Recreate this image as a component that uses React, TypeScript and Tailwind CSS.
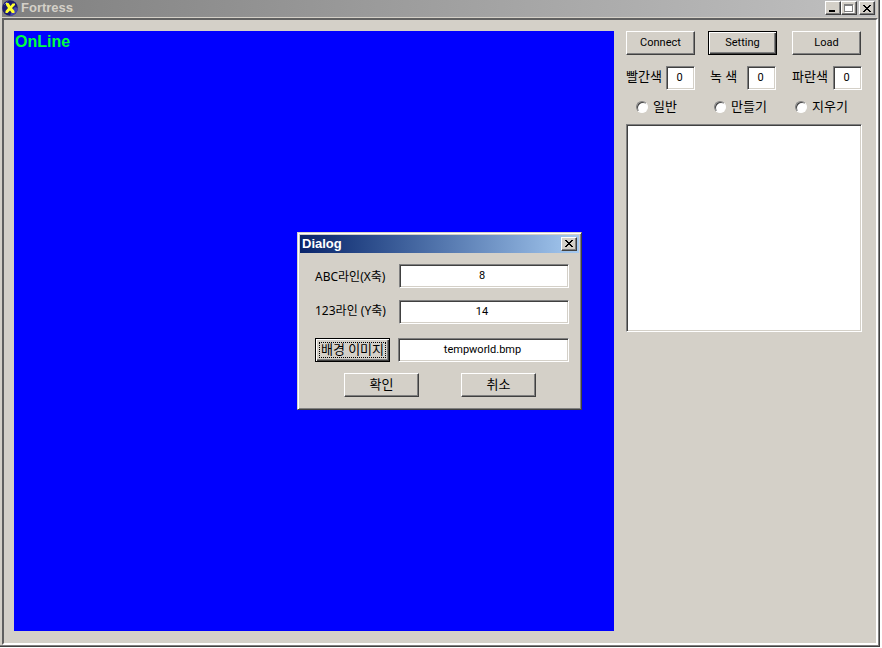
import type { ReactNode } from "react";
import clsx from "clsx";

const SUNKEN =
  "border border-t-[#808080] border-l-[#808080] border-b-white border-r-white bg-white shadow-[inset_1px_1px_0_#404040,inset_-1px_-1px_0_#d4d0c8] outline-none";

const RAISED =
  "border border-t-white border-l-white border-b-[#404040] border-r-[#404040] bg-[#d4d0c8] shadow-[inset_-1px_-1px_0_#808080]";

const COLORS = [
  { id: "red", label: "빨간색", width: "w-[69px]" },
  { id: "green", label: "녹 색", width: "w-[66px]" },
  { id: "blue", label: "파란색", width: "w-[70px]" },
];

const MODES = [
  { id: "normal", label: "일반" },
  { id: "make", label: "만들기" },
  { id: "erase", label: "지우기" },
];

function PushButton({
  children,
  isDefault,
  focused,
  className,
}: {
  children: ReactNode;
  isDefault?: boolean;
  focused?: boolean;
  className?: string;
}) {
  return (
    <button
      type="button"
      className={clsx(
        "flex h-6 items-center justify-center",
        isDefault
          ? "border border-black bg-[#d4d0c8] p-[3px] shadow-[inset_1px_1px_0_#fff,inset_-1px_-1px_0_#404040,inset_-2px_-2px_0_#808080]"
          : RAISED,
        className
      )}
    >
      {focused ? (
        <span className="flex h-full w-full items-center justify-center border border-dotted border-black">
          {children}
        </span>
      ) : (
        children
      )}
    </button>
  );
}

function CaptionButton({ label, children }: { label: string; children: ReactNode }) {
  return (
    <button
      type="button"
      aria-label={label}
      className={clsx("flex h-[14px] w-4 items-center justify-center", RAISED)}
    >
      <svg width="10" height="9" viewBox="0 0 10 9" shapeRendering="crispEdges">
        {children}
      </svg>
    </button>
  );
}

function CloseGlyph() {
  return (
    <path
      d="M1 1h2v1h1v1h2V2h1V1h2v1H8v1H7v1H6v1h1v1h1v1h1v1H7V7H6V6H4v1H3v1H1V7h1V6h1V5h1V4H3V3H2V2H1z"
      fill="#000"
    />
  );
}

function AppIcon() {
  return (
    <svg width="16" height="16" viewBox="0 0 16 16" className="shrink-0" aria-hidden="true">
      <circle cx="8" cy="8" r="7.8" fill="#1c1c70" />
      <path d="M8 15.800A7.800 7.800 0 0 0 15.800 8L13 7l-3 3z" fill="#4848a8" />
      <path d="M2.500 4.500a7 7 0 0 1 3-2.500" stroke="#8c8cc0" fill="none" />
      <path
        d="M4 3h2.500L8.500 6l2-2.500H13V5l-3 3 2.500 3v2h-2.500L8 10.500 5.500 13H3.500v-2L6 8 4 5z"
        fill="#ffff30"
      />
    </svg>
  );
}

function SettingDialog() {
  return (
    <section
      role="dialog"
      aria-labelledby="dialog-title"
      className="absolute top-[232px] left-[297px] w-[285px] border border-t-[#d4d0c8] border-l-[#d4d0c8] border-b-[#404040] border-r-[#404040] bg-[#d4d0c8] p-[2px] pb-3 shadow-[inset_1px_1px_0_#fff,inset_-1px_-1px_0_#808080]"
    >
      <header className="flex h-[18px] items-center justify-between bg-linear-to-r from-[#0a246a] to-[#a6caf0] px-[2px] pb-px">
        <h2 id="dialog-title" className="font-['Liberation_Sans',sans-serif] text-[13px] font-bold text-white">
          Dialog
        </h2>
        <CaptionButton label="Close">
          <CloseGlyph />
        </CaptionButton>
      </header>

      <form className="px-[10px] pl-[15px]">
        <div className="mt-[11px] flex items-center justify-between">
          <label htmlFor="line-x" className="pt-[2px] font-['Noto_Sans','Noto_Sans_CJK_KR',sans-serif] text-[12px]">
            ABC라인(X축)
          </label>
          <input id="line-x" defaultValue="8" className={clsx("h-6 w-[170px] pr-1 pb-[2px] text-center", SUNKEN)} />
        </div>
        <div className="mt-3 flex items-center justify-between">
          <label htmlFor="line-y" className="pb-[2px] font-['Noto_Sans','Noto_Sans_CJK_KR',sans-serif] text-[12px]">
            123라인 (Y축)
          </label>
          <input id="line-y" defaultValue="14" className={clsx("h-6 w-[170px] pr-1 pb-[2px] text-center", SUNKEN)} />
        </div>
        <div className="mt-[14px] flex items-center justify-between">
          <PushButton isDefault focused className="w-[75px] text-[13px]">
            배경 이미지
          </PushButton>
          <input
            aria-label="배경 이미지"
            defaultValue="tempworld.bmp"
            className={clsx("h-6 w-[171px] pr-[2px] pb-[2px] text-center", SUNKEN)}
          />
        </div>
        <div className="mt-[11px] flex gap-[42px] pl-[29px]">
          <PushButton className="w-[75px] pb-px text-[13px]">확인</PushButton>
          <PushButton className="w-[75px] pb-px text-[13px]">취소</PushButton>
        </div>
      </form>
    </section>
  );
}

export default function App() {
  return (
    <div className="relative flex min-h-screen bg-white pr-[2px] pb-px font-['Roboto','Noto_Sans_CJK_KR',sans-serif] text-[11px] leading-4 text-black">
      <main className="flex flex-1 flex-col border-r border-b border-[#404040] bg-[#d4d0c8] shadow-[inset_-1px_-1px_0_#808080]">
        <header className="mr-[3px] ml-[2px] flex h-[17px] items-center bg-linear-to-r from-[#808080] to-[#c0c0c0] pr-px pb-px">
          <AppIcon />
          <h1 className="ml-[3px] flex-1 pb-px font-['Liberation_Sans',sans-serif] text-[13px] font-bold text-[#d4d0c8]">
            Fortress
          </h1>
          <CaptionButton label="Minimize">
            <path d="M1 6h6v2H1z" fill="#000" />
          </CaptionButton>
          <CaptionButton label="Maximize">
            <path d="M1 1h9v8H1z" fill="#fff" />
            <path d="M0 0h9v8H0zM1 2v5h7V2z" fill="#808080" fillRule="evenodd" />
          </CaptionButton>
          <span className="w-[2px]" />
          <CaptionButton label="Close">
            <CloseGlyph />
          </CaptionButton>
        </header>

        <div className="mt-px mr-px mb-px ml-[2px] flex flex-1 items-start gap-3 border-2 border-t-[#606060] border-l-[#606060] border-b-white border-r-white pt-[11px] pr-[14px] pb-[11px] pl-[10px]">
          <div className="aspect-square flex-1 bg-[#0000ff]">
            <p className="pt-[3px] pl-px font-['Liberation_Sans',sans-serif] text-[16px] font-bold text-[#00ff40]">
              OnLine
            </p>
          </div>

          <aside className="w-[236px]">
            <div className="grid grid-cols-[82px_84px_70px]">
              <PushButton className="w-[69px] pb-px">Connect</PushButton>
              <PushButton isDefault className="w-[69px]">
                Setting
              </PushButton>
              <PushButton className="w-[69px] pb-px">Load</PushButton>
            </div>

            <div className="mt-[11px] grid grid-cols-[84px_82px_70px]">
              {COLORS.map((c) => (
                <div key={c.id} className={clsx("flex items-center justify-between", c.width)}>
                  <label htmlFor={c.id} className="pb-[2px] text-[13px] whitespace-nowrap">
                    {c.label}
                  </label>
                  <input
                    id={c.id}
                    defaultValue="0"
                    className={clsx("h-6 w-[29px] pr-[2px] pb-[2px] text-center", SUNKEN)}
                  />
                </div>
              ))}
            </div>

            <div className="mt-[9px] grid grid-cols-[78px_81px_1fr] pl-[10px]">
              {MODES.map((m) => (
                <label key={m.id} className="flex items-center gap-[5px] text-[13px]">
                  <input
                    type="radio"
                    name="mode"
                    className="h-3 w-3 appearance-none rounded-full border border-t-[#808080] border-l-[#808080] border-b-white border-r-white bg-white shadow-[inset_1px_1px_0_#404040] checked:bg-black"
                  />
                  {m.label}
                </label>
              ))}
            </div>

            <textarea
              aria-label="Messages"
              className={clsx("mt-[9px] block h-[208px] w-full resize-none p-1", SUNKEN)}
            />
          </aside>
        </div>
      </main>

      <SettingDialog />
    </div>
  );
}
